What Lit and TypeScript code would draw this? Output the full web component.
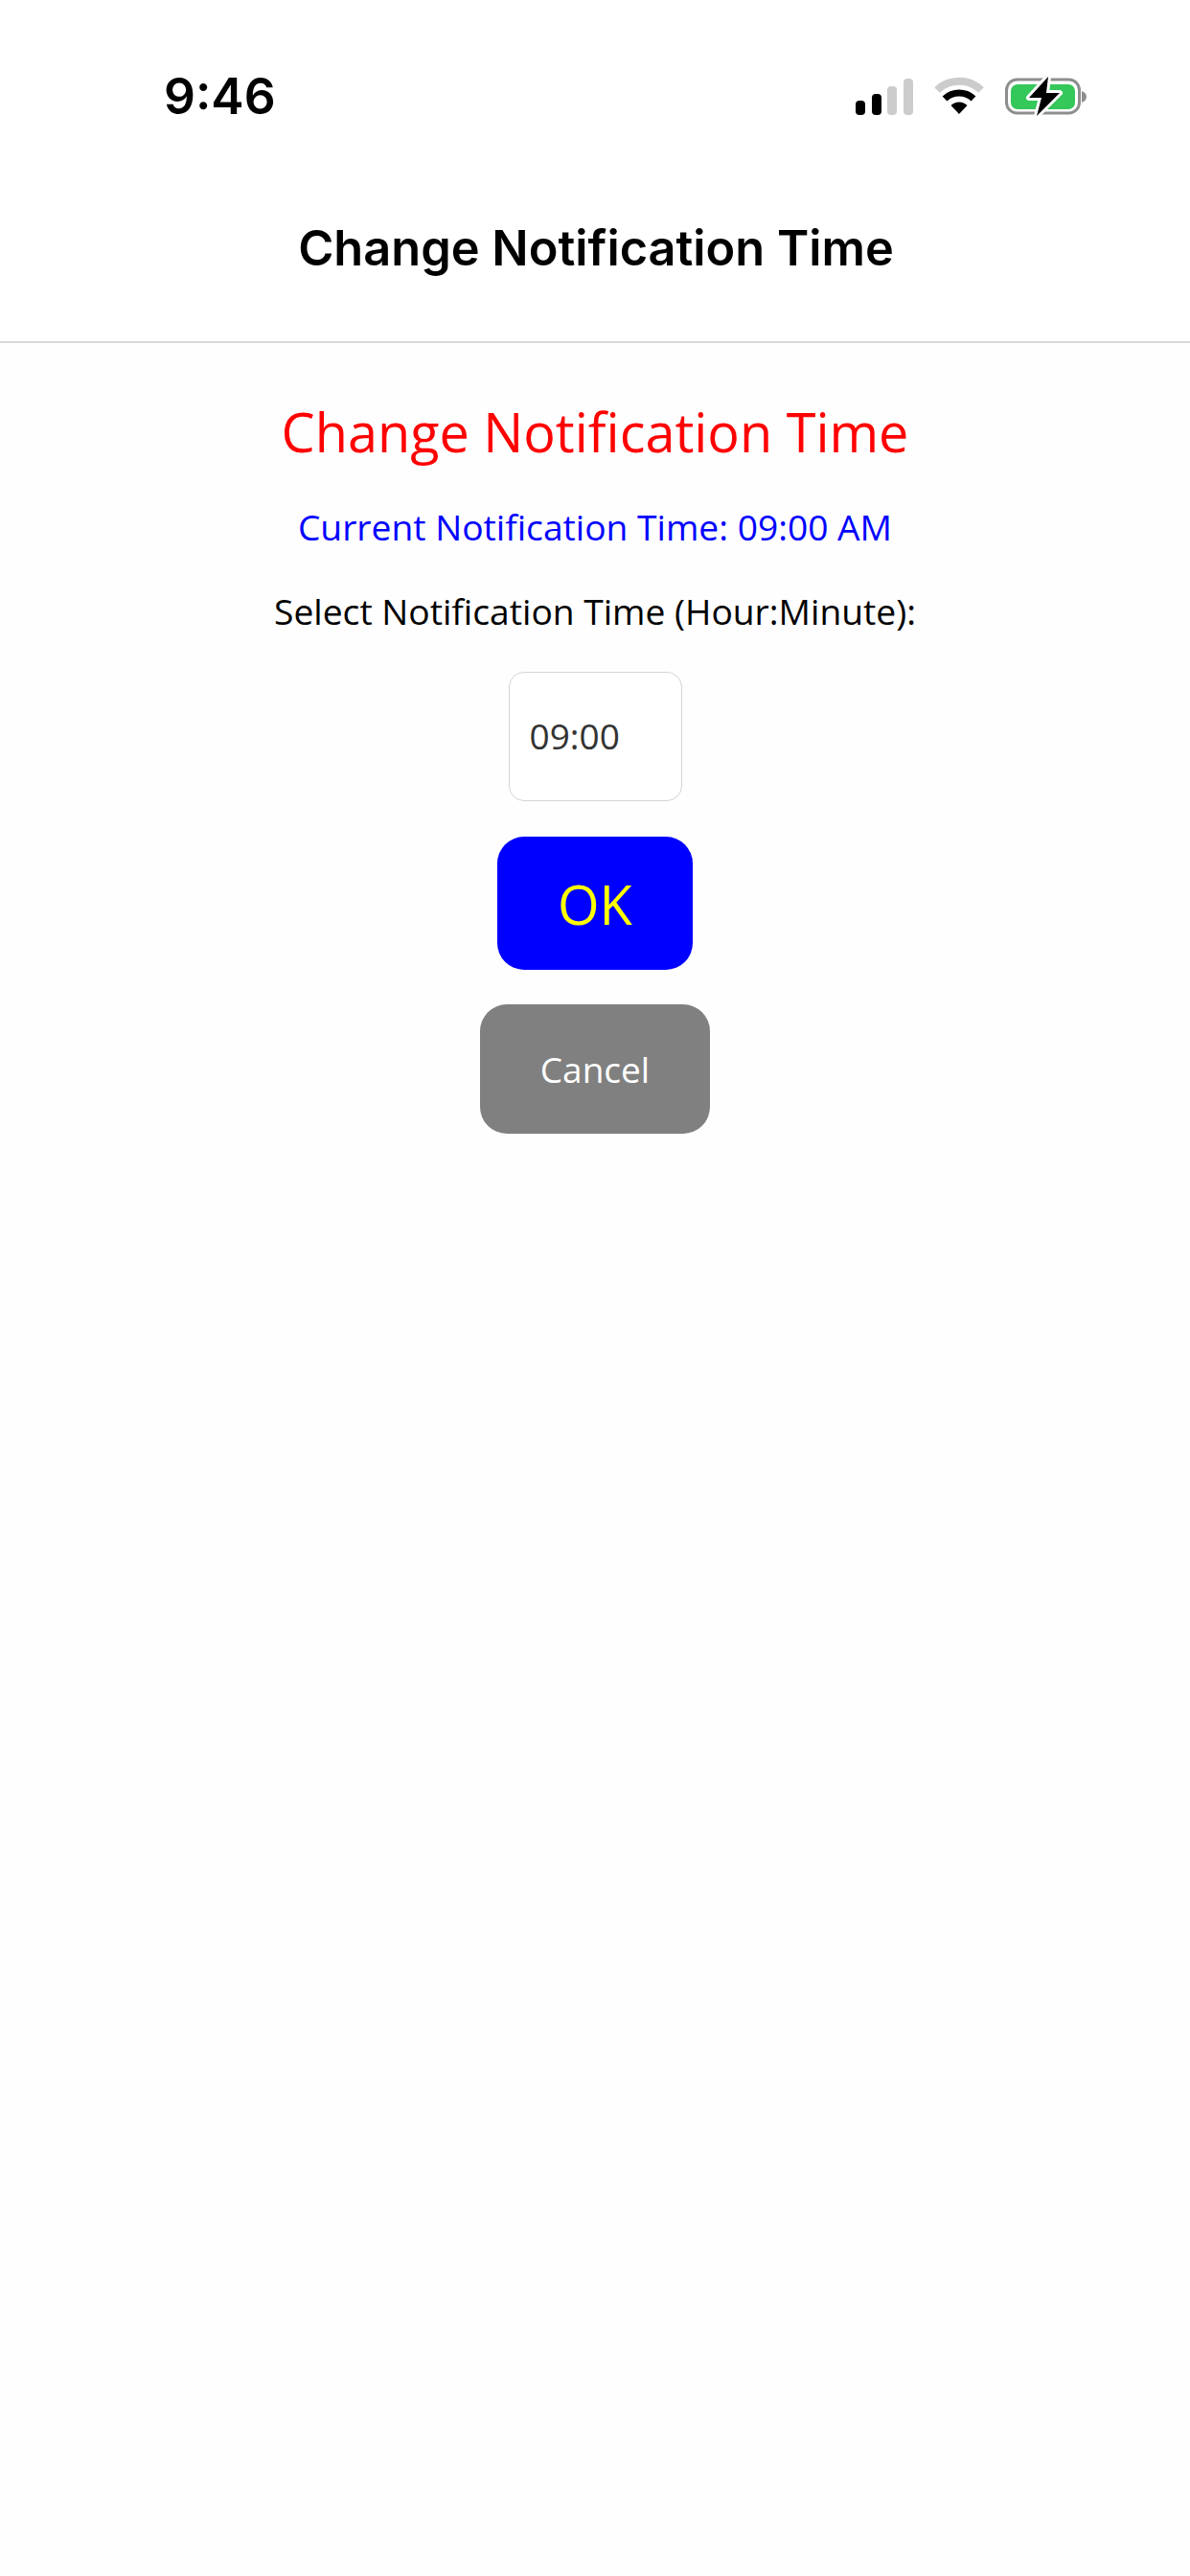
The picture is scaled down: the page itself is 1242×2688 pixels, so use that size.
import { LitElement, html, css } from "lit";
import { customElement } from "lit/decorators.js";

@customElement("app-root")
export class AppRoot extends LitElement {
  static styles = css`
    :host { display: block; width: 1242px; height: 2688px; background: #fefefe; font-family: "Open Sans", sans-serif; overflow: hidden; }
    .header { height: 356px; background: #fff; border-bottom: 2px solid #d8d8d8; box-sizing: content-box; display: flex; flex-direction: column; }
    .status { height: 200px; box-sizing: border-box; padding: 69px 108px 0 171px; display: flex; justify-content: space-between; align-items: flex-start; }
    .time { font-family: Inter, sans-serif; font-weight: 600; font-size: 51.5px; line-height: 62px; color: #000; width: 116px; }
    .icons { display: flex; align-items: center; gap: 22px; padding-top: 12px; }
    .icons svg { display: block; overflow: visible; }
    .nav { text-align: center; font-family: Inter, sans-serif; font-weight: 600; font-size: 50.5px; line-height: 62px; color: #000; margin-top: 28px; padding-left: 2px; }
    .content { display: flex; flex-direction: column; align-items: center; }
    h1 { margin: 53px 0 0; font-weight: 400; font-size: 55.8px; line-height: 78px; color: #f00; }
    .current { margin-top: 35px; font-size: 37.2px; line-height: 52px; color: #00f; }
    .select { margin-top: 36px; font-size: 37.2px; line-height: 52px; color: #000; }
    .input { margin-top: 37px; width: 181px; height: 135px; box-sizing: border-box; border: 1px solid #d4d4d4; border-radius: 16px; background: #fff; padding-left: 21px; padding-bottom: 2px; display: flex; align-items: center; font-size: 37px; color: #333; }
    .btn { display: flex; align-items: center; justify-content: center; border: none; font-family: inherit; padding: 0; }
    .ok { margin-top: 37px; width: 204px; height: 139px; border-radius: 28px; background: #00f; color: #ff0; font-size: 56px; }
    .cancel { margin-top: 36px; width: 240px; height: 135px; border-radius: 28px; background: #808080; color: #fff; font-size: 37px; }
  `;
  render() {
    return html`
      <div class="header">
        <div class="status">
          <div class="time">9:46</div>
          <div class="icons">
            <svg width="60" height="38" viewBox="0 0 60 38">
              <rect x="0" y="23" width="10" height="15" rx="4" fill="#000"/>
              <rect x="17" y="16" width="10" height="22" rx="4" fill="#000"/>
              <rect x="33" y="8" width="10" height="30" rx="4" fill="#ccc"/>
              <rect x="50" y="0" width="10" height="38" rx="4" fill="#ccc"/>
            </svg>
            <svg width="52" height="38" viewBox="0 0 52 38">
              <path d="M3 12 A33 33 0 0 1 49 12" fill="none" stroke="#ccc" stroke-width="8"/>
              <path d="M11 21 A22 22 0 0 1 41 21" fill="none" stroke="#000" stroke-width="7"/>
              <path d="M17.5 28 A12 12 0 0 1 34.500 28 L26 37 Z" fill="#000"/>
            </svg>
            <svg width="85" height="40" viewBox="0 0 85 40">
              <rect x="1.500" y="2" width="76" height="35" rx="11" fill="#fff" stroke="#8e8e8e" stroke-width="3"/>
              <rect x="6" y="7" width="67" height="26" rx="7" fill="#34c759"/>
              <path d="M80 14 C83 15 85 17 85 20 C85 23 83 25 80 26 Z" fill="#8e8e8e"/>
              <path d="M45 -1 L25 21 H38 L33 40 L57 16 H43 Z" fill="#000" stroke="#fff" stroke-width="6" paint-order="stroke" stroke-linejoin="round"/>
            </svg>
          </div>
        </div>
        <div class="nav">Change Notification Time</div>
      </div>
      <div class="content">
        <h1>Change Notification Time</h1>
        <div class="current">Current Notification Time: 09:00 AM</div>
        <div class="select">Select Notification Time (Hour:Minute):</div>
        <div class="input">09:00</div>
        <button class="btn ok">OK</button>
        <button class="btn cancel">Cancel</button>
      </div>
    `;
  }
}
